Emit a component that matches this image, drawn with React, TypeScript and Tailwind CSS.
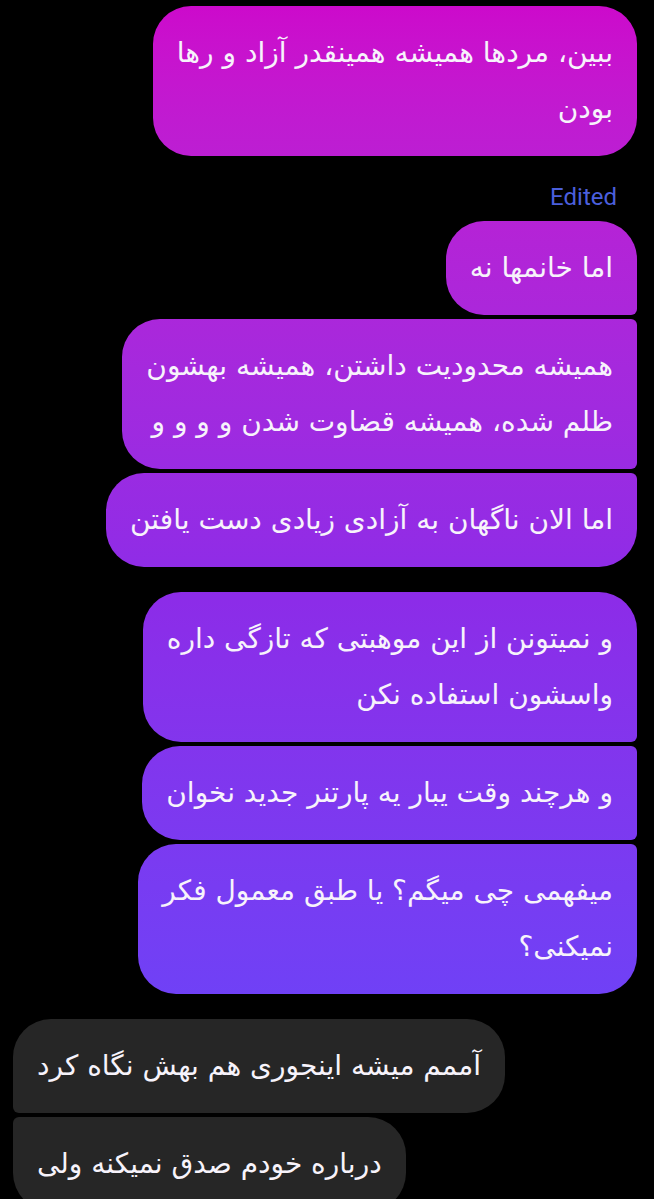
import React from 'react';

type Msg = {
  id: number;
  lines: string[];
  corners: string;
  gapTop: string;
};

const sent: Msg[] = [
  { id: 1, lines: ['ببین، مردها همیشه همینقدر آزاد و رها', 'بودن'], corners: 'rounded-[38px]', gapTop: 'mt-[6px]' },
  { id: 2, lines: ['اما خانمها نه'], corners: 'rounded-[38px] rounded-br-[6px]', gapTop: 'mt-[14px]' },
  { id: 3, lines: ['همیشه محدودیت داشتن، همیشه بهشون', 'ظلم شده، همیشه قضاوت شدن و و و و'], corners: 'rounded-l-[38px] rounded-r-[6px]', gapTop: 'mt-[4px]' },
  { id: 4, lines: ['اما الان ناگهان به آزادی زیادی دست یافتن'], corners: 'rounded-[38px] rounded-tr-[6px]', gapTop: 'mt-[4px]' },
  { id: 5, lines: ['و نمیتونن از این موهبتی که تازگی داره', 'واسشون استفاده نکن'], corners: 'rounded-[38px] rounded-br-[6px]', gapTop: 'mt-[25px]' },
  { id: 6, lines: ['و هرچند وقت یبار یه پارتنر جدید نخوان'], corners: 'rounded-l-[38px] rounded-r-[6px]', gapTop: 'mt-[4px]' },
  { id: 7, lines: ['میفهمی چی میگم؟ یا طبق معمول فکر', 'نمیکنی؟'], corners: 'rounded-[38px] rounded-tr-[6px]', gapTop: 'mt-[4px]' },
];

const received: Msg[] = [
  { id: 8, lines: ['آممم میشه اینجوری هم بهش نگاه کرد'], corners: 'rounded-[38px] rounded-bl-[6px]', gapTop: 'mt-[25px]' },
  { id: 9, lines: ['درباره خودم صدق نمیکنه ولی'], corners: 'rounded-[38px] rounded-tl-[6px]', gapTop: 'mt-[4px]' },
];

const Lines: React.FC<{ lines: string[] }> = ({ lines }) => (
  <>
    {lines.map((l, i) => (
      <p key={i} className="whitespace-nowrap">{l}</p>
    ))}
  </>
);

export default function App() {
  return (
    <div className="h-[1199px] w-[654px] overflow-hidden bg-black font-['DejaVu_Sans',sans-serif] text-[28px] leading-[56px] text-[#f7f3fb]">
      <div className="flex flex-col items-end pr-[17px]">
        {sent.map(m => (
          <React.Fragment key={m.id}>
            {m.id === 2 && (
              <div className="mt-[26px] mr-[20px] -mb-[5px] font-['Roboto',sans-serif] text-[24px] leading-[30px] text-[#4b5fdc]">
                Edited
              </div>
            )}
            <div
              dir="rtl"
              className={`${m.gapTop} ${m.corners} bg-linear-to-b from-[#cd08cb] via-[#8c2ce8] to-[#5e48fd] bg-fixed px-[24px] py-[19px] text-right`}
            >
              <Lines lines={m.lines} />
            </div>
          </React.Fragment>
        ))}
      </div>
      <div className="flex flex-col items-start pl-[13px]">
        {received.map(m => (
          <div
            key={m.id}
            dir="rtl"
            className={`${m.gapTop} ${m.corners} bg-[#262626] px-[24px] py-[19px] text-right`}
          >
            <Lines lines={m.lines} />
          </div>
        ))}
      </div>
    </div>
  );
}
